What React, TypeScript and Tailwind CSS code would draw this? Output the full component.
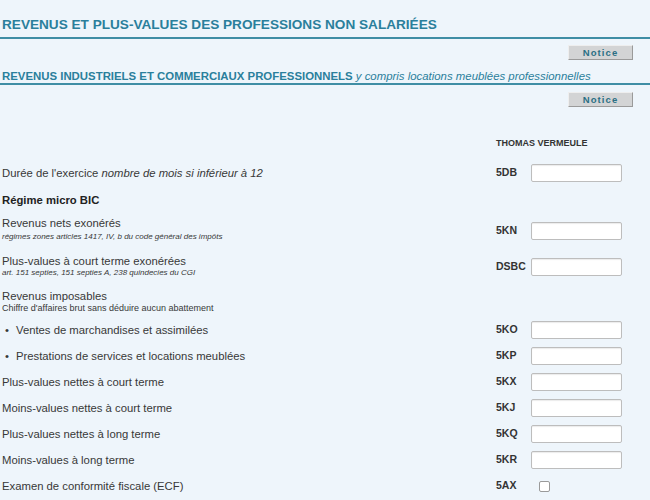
import React from "react";

const font = { fontFamily: '"Liberation Sans", Arial, sans-serif' };

function NoticeButton() {
  return (
    <div className="flex justify-end pr-[17px]">
      <button className="h-[15px] w-[65px] bg-[#d3d4d5] border border-t-[#eeeeee] border-l-[#eeeeee] border-b-[#9a9a9a] border-r-[#9a9a9a] text-[9.5px] leading-[13px] font-bold tracking-[1.1px] text-[#2a6f84]">
        Notice
      </button>
    </div>
  );
}

function Field({ code }: { code: string }) {
  return (
    <div className="flex items-center">
      <span className="w-[35px] text-[10.5px] font-bold text-[#333]">{code}</span>
      <input
        type="text"
        className="w-[91px] h-[18px] bg-white border border-[#bdbdbd] rounded-[2px] shadow-[inset_0_1px_1px_rgba(0,0,0,0.08)] outline-none"
      />
    </div>
  );
}

const simpleRows: { label: string; code: string; bullet?: boolean }[] = [
  { label: "Ventes de marchandises et assimilées", code: "5KO", bullet: true },
  { label: "Prestations de services et locations meublées", code: "5KP", bullet: true },
  { label: "Plus-values nettes à court terme", code: "5KX" },
  { label: "Moins-values nettes à court terme", code: "5KJ" },
  { label: "Plus-values nettes à long terme", code: "5KQ" },
  { label: "Moins-values à long terme", code: "5KR" },
];

export default function App() {
  return (
    <div style={font} className="w-[650px] h-[500px] overflow-hidden bg-[#eef5fb] text-[#383838]">
      {/* section title */}
      <div className="pt-[17px] pb-[4px] pl-[2px] border-b-2 border-[#3f8ea5]">
        <h1 className="text-[13.6px] leading-[16px] font-bold text-[#2a7f9c] whitespace-nowrap">
          REVENUS ET PLUS-VALUES DES PROFESSIONS NON SALARIÉES
        </h1>
      </div>
      <div className="mt-[6px]">
        <NoticeButton />
      </div>

      {/* sub section */}
      <div className="mt-[10px] pl-[2px] border-b-2 border-[#3f8ea5]">
        <h2 className="text-[11.4px] leading-[13px] text-[#2a7f9c] whitespace-nowrap">
          <span className="font-bold">REVENUS INDUSTRIELS ET COMMERCIAUX PROFESSIONNELS</span>{" "}
          <i>y compris locations meublées professionnelles</i>
        </h2>
      </div>
      <div className="mt-[7px]">
        <NoticeButton />
      </div>

      <div className="pl-[2px] pr-[28px] text-[11.3px]">
        <div className="h-[53px] pl-[494px] pt-[31px]">
          <span className="block text-[9px] leading-[10px] font-bold text-[#333] whitespace-nowrap">
            THOMAS VERMEULE
          </span>
        </div>

        <div className="h-[26px] flex items-center justify-between">
          <span>
            Durée de l'exercice <i>nombre de mois si inférieur à 12</i>
          </span>
          <Field code="5DB" />
        </div>

        <div className="h-[28px] flex items-center font-bold text-[#222]">Régime micro BIC</div>

        <div className="h-[34px] flex items-start justify-between">
          <div className="pt-[2px]">
            <div className="leading-[14px]">Revenus nets exonérés</div>
            <div className="leading-[14px] text-[8px] italic">
              régimes zones articles 1417, IV, b du code général des impôts
            </div>
          </div>
          <div className="mt-[8px]">
            <Field code="5KN" />
          </div>
        </div>

        <div className="h-[34px] flex items-start justify-between">
          <div className="pt-[6px]">
            <div className="leading-[14px]">Plus-values à court terme exonérées</div>
            <div className="leading-[10px] text-[8px] italic">
              art. 151 septies, 151 septies A, 238 quindecies du CGI
            </div>
          </div>
          <div className="mt-[10px]">
            <Field code="DSBC" />
          </div>
        </div>

        <div className="h-[35px] pt-[7px]">
          <div className="leading-[14px]">Revenus imposables</div>
          <div className="leading-[10px] text-[9px]">
            Chiffre d'affaires brut sans déduire aucun abattement
          </div>
        </div>

        {simpleRows.map((row) => (
          <div key={row.code} className="h-[26px] flex items-center justify-between">
            <span>
              {row.bullet && <span className="ml-[3px] mr-[7px]">•</span>}
              {row.label}
            </span>
            <Field code={row.code} />
          </div>
        ))}

        <div className="h-[26px] flex items-center justify-between">
          <span>Examen de conformité fiscale (ECF)</span>
          <div className="flex items-center w-[126px]">
            <span className="w-[35px] text-[10.5px] font-bold text-[#333]">5AX</span>
            <input
              type="checkbox"
              className="ml-[8px] w-[11px] h-[11px] appearance-none bg-white border border-[#9a9a9a] rounded-[2px]"
            />
          </div>
        </div>
      </div>
    </div>
  );
}
